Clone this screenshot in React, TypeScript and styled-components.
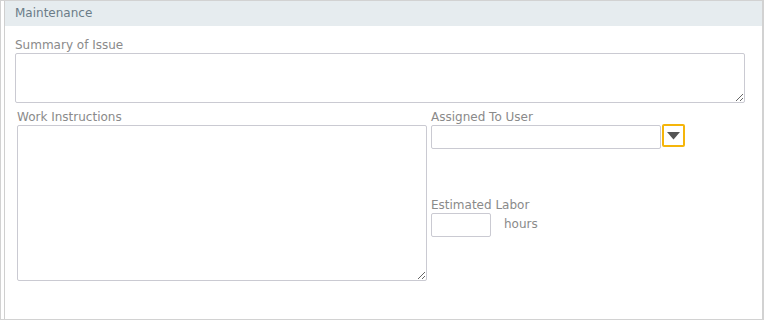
import styled, { createGlobalStyle } from 'styled-components';

const GlobalStyle = createGlobalStyle`
  html, body {
    margin: 0;
    padding: 0;
    background: #ffffff;
  }
  body {
    font-family: "DejaVu Sans", Verdana, sans-serif;
  }
`;

const Frame = styled.div`
  width: 764px;
  height: 320px;
  box-sizing: border-box;
  border: 1px solid #d2d2d2;
  border-right-width: 2px;
  padding-left: 3px;
  display: flex;
`;

const Panel = styled.section`
  flex: 1;
  border-left: 1px solid #cfcfcf;
  display: flex;
  flex-direction: column;
`;

const Header = styled.header`
  height: 25px;
  background: #e6ecef;
  color: #6b7c88;
  font-size: 12px;
  line-height: 25px;
  padding-left: 10px;
`;

const Body = styled.div`
  padding: 10px 0 0 10px;
  display: flex;
  flex-direction: column;
`;

const Label = styled.label`
  display: block;
  color: #8a8a8a;
  font-size: 12px;
  line-height: 16px;
  padding-top: 1px;
`;

const Area = styled.textarea<{ $w: number; $h: number }>`
  display: block;
  width: ${(p) => p.$w}px;
  height: ${(p) => p.$h}px;
  box-sizing: border-box;
  border: 1px solid #cacad2;
  border-radius: 2px;
  margin: 0;
  padding: 2px;
  font-family: inherit;
  outline: none;
`;

const Row = styled.div`
  display: flex;
  margin-top: 5px;
  padding-left: 2px;
`;

const LeftCol = styled.div`
  width: 414px;
`;

const RightCol = styled.div`
  display: flex;
  flex-direction: column;
`;

const Field = styled.div<{ $gap?: number }>`
  margin-top: ${(p) => p.$gap ?? 0}px;
`;

const InputLine = styled.div`
  display: flex;
  align-items: flex-start;
`;

const TextInput = styled.input<{ $w: number }>`
  width: ${(p) => p.$w}px;
  height: 24px;
  box-sizing: border-box;
  border: 1px solid #cacad2;
  border-radius: 2px;
  margin: 0;
  padding: 0 4px;
  outline: none;
`;

const DropButton = styled.button`
  width: 23px;
  height: 23px;
  margin: -1px 0 0 1px;
  box-sizing: border-box;
  border: 2px solid #f5b50a;
  border-radius: 2px;
  background: #ffffff;
  padding: 0;
  display: flex;
  align-items: center;
  justify-content: center;
`;

const Unit = styled.span`
  color: #8a8a8a;
  font-size: 12px;
  line-height: 22px;
  margin-left: 13px;
`;

export default function App() {
  return (
    <>
      <GlobalStyle />
      <Frame>
        <Panel>
          <Header>Maintenance</Header>
          <Body>
            <Label>Summary of Issue</Label>
            <Area $w={730} $h={50} />
            <Row>
              <LeftCol>
                <Label>Work Instructions</Label>
                <Area $w={410} $h={156} />
              </LeftCol>
              <RightCol>
                <Field>
                  <Label>Assigned To User</Label>
                  <InputLine>
                    <TextInput $w={230} />
                    <DropButton aria-label="Open">
                      <svg width="13" height="8" viewBox="0 0 13 8">
                        <path d="M0 0 H13 L6.5 7.5 Z" fill="#555555" />
                      </svg>
                    </DropButton>
                  </InputLine>
                </Field>
                <Field $gap={47}>
                  <Label>Estimated Labor</Label>
                  <InputLine>
                    <TextInput $w={60} />
                    <Unit>hours</Unit>
                  </InputLine>
                </Field>
              </RightCol>
            </Row>
          </Body>
        </Panel>
      </Frame>
    </>
  );
}
